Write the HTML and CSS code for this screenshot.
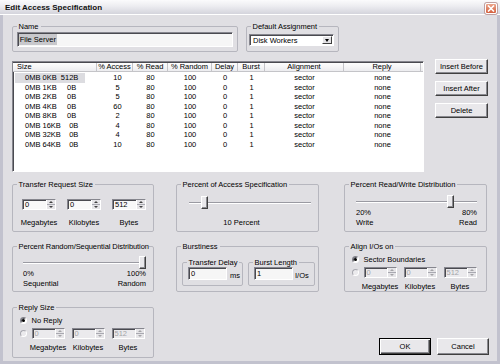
FILE: index.html
```html
<!DOCTYPE html>
<html lang="en">

<head>
    <meta charset="UTF-8">
    <meta name="viewport" content="width=device-width, initial-scale=1.0">
    <title>Edit Access Specification</title>
    <link rel="stylesheet" href="styles.css">
</head>

<body>
    <div class="dialog">
        <!-- Title bar -->
        <div class="titlebar">
            <span class="title">Edit Access Specification</span>
            <span class="close-btn">
                <svg width="8" height="7" viewBox="0 0 8 7">
                    <path d="M1 0.5 L7 6.5 M7 0.5 L1 6.5" stroke="#fff" stroke-width="1.6" />
                </svg>
            </span>
        </div>

        <div class="client">
            <!-- Name + default assignment -->
            <div class="top-row">
                <fieldset class="group name-group">
                    <legend>Name</legend>
                    <div class="edit name-edit"><span class="selected-text">File Server</span></div>
                </fieldset>
                <fieldset class="group assign-group">
                    <legend>Default Assignment</legend>
                    <div class="combo">
                        <span class="combo-text">Disk Workers</span>
                        <span class="combo-btn"></span>
                    </div>
                </fieldset>
            </div>

            <!-- Access list + side buttons -->
            <div class="list-row">
                <div class="listview">
                    <div class="lv-header">
                        <div class="lv-col col-size">Size</div>
                        <div class="lv-col">% Access</div>
                        <div class="lv-col">% Read</div>
                        <div class="lv-col">% Random</div>
                        <div class="lv-col">Delay</div>
                        <div class="lv-col">Burst</div>
                        <div class="lv-col">Alignment</div>
                        <div class="lv-col">Reply</div>
                    </div>
                    <div class="lv-body">
                        <div class="lv-item selected">
                            <div class="cell col-size"><span class="size-text">0MB 0KB  512B</span></div>
                            <div class="cell col-access">10</div><div class="cell">80</div><div class="cell">100</div>
                            <div class="cell">0</div><div class="cell">1</div><div class="cell">sector</div><div class="cell">none</div>
                        </div>
                        <div class="lv-item">
                            <div class="cell col-size"><span class="size-text">0MB 1KB     0B</span></div>
                            <div class="cell col-access">5</div><div class="cell">80</div><div class="cell">100</div>
                            <div class="cell">0</div><div class="cell">1</div><div class="cell">sector</div><div class="cell">none</div>
                        </div>
                        <div class="lv-item">
                            <div class="cell col-size"><span class="size-text">0MB 2KB     0B</span></div>
                            <div class="cell col-access">5</div><div class="cell">80</div><div class="cell">100</div>
                            <div class="cell">0</div><div class="cell">1</div><div class="cell">sector</div><div class="cell">none</div>
                        </div>
                        <div class="lv-item">
                            <div class="cell col-size"><span class="size-text">0MB 4KB     0B</span></div>
                            <div class="cell col-access">60</div><div class="cell">80</div><div class="cell">100</div>
                            <div class="cell">0</div><div class="cell">1</div><div class="cell">sector</div><div class="cell">none</div>
                        </div>
                        <div class="lv-item">
                            <div class="cell col-size"><span class="size-text">0MB 8KB     0B</span></div>
                            <div class="cell col-access">2</div><div class="cell">80</div><div class="cell">100</div>
                            <div class="cell">0</div><div class="cell">1</div><div class="cell">sector</div><div class="cell">none</div>
                        </div>
                        <div class="lv-item">
                            <div class="cell col-size"><span class="size-text">0MB 16KB    0B</span></div>
                            <div class="cell col-access">4</div><div class="cell">80</div><div class="cell">100</div>
                            <div class="cell">0</div><div class="cell">1</div><div class="cell">sector</div><div class="cell">none</div>
                        </div>
                        <div class="lv-item">
                            <div class="cell col-size"><span class="size-text">0MB 32KB    0B</span></div>
                            <div class="cell col-access">4</div><div class="cell">80</div><div class="cell">100</div>
                            <div class="cell">0</div><div class="cell">1</div><div class="cell">sector</div><div class="cell">none</div>
                        </div>
                        <div class="lv-item">
                            <div class="cell col-size"><span class="size-text">0MB 64KB    0B</span></div>
                            <div class="cell col-access">10</div><div class="cell">80</div><div class="cell">100</div>
                            <div class="cell">0</div><div class="cell">1</div><div class="cell">sector</div><div class="cell">none</div>
                        </div>
                    </div>
                </div>

                <div class="side-buttons">
                    <button class="btn side-btn">Insert Before</button>
                    <button class="btn side-btn">Insert After</button>
                    <button class="btn side-btn">Delete</button>
                </div>
            </div>

            <!-- Settings groups -->
            <div class="settings">
                <fieldset class="group col-a">
                    <legend>Transfer Request Size</legend>
                    <div class="spin-row transfer-body">
                        <div class="spin-col">
                            <div class="spin"><span class="spin-val">0</span><span class="spin-btns"><i class="up"></i><i class="down"></i></span></div>
                            <span class="spin-label">Megabytes</span>
                        </div>
                        <div class="spin-col">
                            <div class="spin"><span class="spin-val">0</span><span class="spin-btns"><i class="up"></i><i class="down"></i></span></div>
                            <span class="spin-label">Kilobytes</span>
                        </div>
                        <div class="spin-col">
                            <div class="spin"><span class="spin-val">512</span><span class="spin-btns"><i class="up"></i><i class="down"></i></span></div>
                            <span class="spin-label">Bytes</span>
                        </div>
                    </div>
                </fieldset>

                <fieldset class="group col-b">
                    <legend>Percent of Access Specification</legend>
                    <div class="access-body">
                        <div class="slider">
                            <div class="track"></div>
                            <div class="thumb" style="--pos: 0.1"></div>
                        </div>
                        <div class="slider-caption">10 Percent</div>
                    </div>
                </fieldset>

                <fieldset class="group col-c">
                    <legend>Percent Read/Write Distribution</legend>
                    <div class="rw-body">
                        <div class="slider">
                            <div class="track"></div>
                            <div class="thumb" style="--pos: 0.8"></div>
                        </div>
                        <div class="slider-ends">
                            <span>20%<br>Write</span>
                            <span class="end-right">80%<br>Read</span>
                        </div>
                    </div>
                </fieldset>

                <fieldset class="group col-a">
                    <legend class="long-legend">Percent Random/Sequential Distribution</legend>
                    <div class="random-body">
                        <div class="slider">
                            <div class="track"></div>
                            <div class="thumb" style="--pos: 1"></div>
                        </div>
                        <div class="slider-ends">
                            <span>0%<br>Sequential</span>
                            <span class="end-right">100%<br>Random</span>
                        </div>
                    </div>
                </fieldset>

                <fieldset class="group col-b">
                    <legend>Burstiness</legend>
                    <div class="burst-body">
                        <fieldset class="group inner-group delay-group">
                            <legend>Transfer Delay</legend>
                            <div class="inner-body">
                                <div class="edit small-edit">0</div>
                                <span class="unit">ms</span>
                            </div>
                        </fieldset>
                        <fieldset class="group inner-group length-group">
                            <legend>Burst Length</legend>
                            <div class="inner-body">
                                <div class="edit small-edit">1</div>
                                <span class="unit unit-ios">I/Os</span>
                            </div>
                        </fieldset>
                    </div>
                </fieldset>

                <fieldset class="group col-c">
                    <legend>Align I/Os on</legend>
                    <div class="option-body">
                        <div class="radio-row">
                            <span class="radio checked"></span>
                            <span>Sector Boundaries</span>
                        </div>
                        <div class="radio-row option-spins">
                            <span class="radio disabled"></span>
                            <div class="spin-col narrow">
                                <div class="spin disabled"><span class="spin-val">0</span><span class="spin-btns"><i class="up"></i><i class="down"></i></span></div>
                                <span class="spin-label option-label">Megabytes</span>
                            </div>
                            <div class="spin-col narrow">
                                <div class="spin disabled"><span class="spin-val">0</span><span class="spin-btns"><i class="up"></i><i class="down"></i></span></div>
                                <span class="spin-label option-label">Kilobytes</span>
                            </div>
                            <div class="spin-col narrow">
                                <div class="spin disabled"><span class="spin-val">512</span><span class="spin-btns"><i class="up"></i><i class="down"></i></span></div>
                                <span class="spin-label option-label">Bytes</span>
                            </div>
                        </div>
                    </div>
                </fieldset>
            </div>

            <!-- Reply size + dialog buttons -->
            <div class="bottom-row">
                <fieldset class="group col-a reply-group">
                    <legend>Reply Size</legend>
                    <div class="option-body reply-body">
                        <div class="radio-row">
                            <span class="radio checked"></span>
                            <span>No Reply</span>
                        </div>
                        <div class="radio-row option-spins">
                            <span class="radio disabled"></span>
                            <div class="spin-col narrow">
                                <div class="spin disabled"><span class="spin-val">0</span><span class="spin-btns"><i class="up"></i><i class="down"></i></span></div>
                                <span class="spin-label option-label">Megabytes</span>
                            </div>
                            <div class="spin-col narrow">
                                <div class="spin disabled"><span class="spin-val">0</span><span class="spin-btns"><i class="up"></i><i class="down"></i></span></div>
                                <span class="spin-label option-label">Kilobytes</span>
                            </div>
                            <div class="spin-col narrow">
                                <div class="spin disabled"><span class="spin-val">512</span><span class="spin-btns"><i class="up"></i><i class="down"></i></span></div>
                                <span class="spin-label option-label">Bytes</span>
                            </div>
                        </div>
                    </div>
                </fieldset>

                <div class="dialog-buttons">
                    <button class="btn dlg-btn btn-default">OK</button>
                    <button class="btn dlg-btn">Cancel</button>
                </div>
            </div>
        </div>
    </div>
</body>

</html>
```

FILE: styles.css
```css
/* Reset styling */
* {
    margin: 0;
    padding: 0;
    box-sizing: border-box;
}

body {
    width: 500px;
    height: 364px;
    overflow: hidden;
    background-color: #e0dfe3;
    font-family: "Liberation Sans", Arial, sans-serif;
    font-size: 7.5px;
    line-height: 9px;
    color: #000;
}

/* Window frame */
.dialog {
    width: 500px;
    height: 364px;
    display: flex;
    flex-direction: column;
}

.titlebar {
    height: 15px;
    display: flex;
    align-items: center;
    justify-content: space-between;
    padding: 0 3px 0 5px;
    background: linear-gradient(#fbfbfc, #ececf0 45%, #d4d4dc);
    border-bottom: 1px solid #fff;
}

.title {
    font-weight: bold;
    font-size: 8px;
    color: #111;
    padding-top: 1px;
}

.close-btn {
    width: 12px;
    height: 11px;
    margin-top: 2px;
    display: flex;
    align-items: center;
    justify-content: center;
    background: linear-gradient(#eba58c, #d4603e);
    border: 1px solid #fff;
    border-radius: 2px;
    box-shadow: 0 0 0 1px #c0a0a0;
}

.client {
    flex: 1;
    display: flex;
    flex-direction: column;
    padding: 7px 8px 0 9px;
    background-color: #e0dfe3;
    border: 3px solid #c2c2ce;
    border-top: none;
}

/* Group boxes */
.group {
    border: 1px solid #b6b6be;
    border-radius: 2px;
    min-width: 0;
}

.group legend {
    margin-left: 4px;
    padding: 0 2px 0 1.5px;
    line-height: 9px;
    white-space: nowrap;
}

.group legend.long-legend {
    padding-right: 0;
    letter-spacing: -0.08px;
}

/* Sunken controls */
.edit,
.spin,
.combo,
.listview {
    border: 1px solid;
    border-color: #86868e #fff #fff #86868e;
    box-shadow: inset 1px 1px 0 #4a4a50;
}

.edit {
    background-color: #f6f6f6;
    padding-left: 2px;
}

/* Top row */
.top-row {
    display: flex;
    gap: 8px;
    height: 30px;
}

.name-group {
    width: 226px;
    height: 30px;
}

.name-edit {
    width: 216px;
    height: 15px;
    margin: 1px 0 0 3.7px;
    line-height: 13px;
    padding-left: 1px;
}

.selected-text {
    background-color: #c8c8cc;
    padding: 1px 1px;
}

.assign-group {
    width: 93px;
    height: 30px;
}

.combo {
    width: 85px;
    height: 12px;
    margin: 3px 0 0 2px;
    display: flex;
    align-items: center;
    justify-content: space-between;
    background-color: #fff;
    padding-left: 3px;
}

.combo-btn {
    width: 10px;
    height: 8px;
    margin-right: 1px;
    display: flex;
    align-items: center;
    justify-content: center;
    background-color: #e4e3e6;
    border: 1px solid;
    border-color: #fff #404040 #404040 #fff;
}

.combo-btn::after {
    content: "";
    border-left: 2.5px solid transparent;
    border-right: 2.5px solid transparent;
    border-top: 3px solid #000;
}

/* List view */
.list-row {
    display: flex;
    gap: 11px;
    height: 113px;
    margin-top: 7px;
}

.listview {
    width: 412px;
    height: 111px;
    margin-top: 2px;
    background-color: #fff;
    overflow: hidden;
}

.lv-header,
.lv-item {
    display: grid;
    grid-template-columns: 84px 36px 35px 44px 26px 27px 79px 77px;
}

.lv-header {
    height: 9px;
    margin-top: 1px;
    background: linear-gradient(#fefefe, #ececef);
    border-bottom: 1px solid #c4c4c8;
}

.lv-col {
    text-align: center;
    line-height: 8px;
    border-right: 1px solid #c4c4c8;
    white-space: nowrap;
    overflow: hidden;
}

.lv-col.col-size {
    text-align: left;
    padding-left: 4px;
}

.lv-body {
    padding-top: 1px;
}

.lv-item {
    height: 9.5px;
    line-height: 9.5px;
}

.cell {
    text-align: center;
    white-space: nowrap;
}

.cell.col-access {
    padding-left: 5px;
}

.cell.col-size {
    text-align: left;
    padding-left: 2px;
}

.size-text {
    display: block;
    width: 70px;
    padding-left: 10px;
    white-space: pre;
}

.lv-item.selected .size-text {
    background-color: #dcdce0;
}

/* Buttons */
.btn {
    font: inherit;
    color: #000;
    background-color: #e9e8eb;
    border: 1px solid;
    border-color: #fff #404040 #404040 #fff;
    box-shadow: inset -1px -1px 0 #8a8a90;
}

.side-buttons {
    display: flex;
    flex-direction: column;
    gap: 7px;
}

.side-btn {
    width: 53px;
    height: 15px;
}

.dialog-buttons {
    display: flex;
    gap: 6px;
    align-self: flex-end;
    margin-bottom: 3px;
}

.dlg-btn {
    width: 52px;
    height: 17px;
}

.btn-default {
    border: 1px solid #000;
    box-shadow: inset 1px 1px 0 #fff, inset -1px -1px 0 #404040, inset -2px -2px 0 #8a8a90;
}

/* Settings grid */
.settings {
    display: grid;
    grid-template-columns: 164px 168px 143px;
    grid-template-rows: 52px 50px;
    row-gap: 10px;
    margin-top: 8px;
}

.col-a {
    width: 142px;
}

.col-b,
.col-c {
    width: 143px;
}

/* Spin boxes */
.spin-row {
    display: flex;
}

.transfer-body {
    gap: 11px;
    padding: 10px 0 0 9px;
}

.spin-col {
    width: 34px;
    display: flex;
    flex-direction: column;
    align-items: center;
}

.spin-col.narrow {
    width: 33px;
}

.spin {
    width: 100%;
    height: 11px;
    display: flex;
    background-color: #f8f8f8;
}

.spin-val {
    flex: 1;
    padding-left: 2px;
    line-height: 9px;
}

.spin-btns {
    width: 9px;
    display: flex;
    flex-direction: column;
    background-color: #e6e5e8;
    border-left: 1px solid #fff;
}

.spin-btns i {
    flex: 1;
    display: flex;
    align-items: center;
    justify-content: center;
}

.spin-btns i.up {
    border-bottom: 1px solid #a8a8b0;
}

.spin-btns i.up::after {
    content: "";
    border-left: 2px solid transparent;
    border-right: 2px solid transparent;
    border-bottom: 2px solid #404040;
}

.spin-btns i.down::after {
    content: "";
    border-left: 2px solid transparent;
    border-right: 2px solid transparent;
    border-top: 2px solid #404040;
}

.spin.disabled {
    background-color: #ebeaed;
    color: #a4a4a8;
}

.spin.disabled .spin-btns i.up::after {
    border-bottom-color: #a4a4a8;
}

.spin.disabled .spin-btns i.down::after {
    border-top-color: #a4a4a8;
}

.spin-label {
    margin-top: 7.5px;
    white-space: nowrap;
}

.option-label {
    margin-top: 3.5px;
}

/* Sliders */
.slider {
    position: relative;
    height: 13px;
    padding-top: 6px;
}

.track {
    height: 2px;
    border-top: 1px solid #9a9aa2;
    border-bottom: 1px solid #fff;
}

.thumb {
    position: absolute;
    top: 0;
    left: calc((100% - 7px) * var(--pos));
    width: 7px;
    height: 13px;
    background-color: #e9e8eb;
    border: 1px solid;
    border-color: #fff #404040 #404040 #fff;
    box-shadow: inset -1px -1px 0 #8a8a90;
}

.access-body {
    padding: 7px 7px 0 12px;
}

.slider-caption {
    margin: 8.5px 0 0 -12px;
    text-align: center;
    padding-right: 5px;
}

.rw-body {
    padding: 6px 9px 0 11px;
}

.random-body {
    padding: 5px 7px 0 10px;
}

.slider-ends {
    display: flex;
    justify-content: space-between;
    line-height: 10px;
}

.end-right {
    text-align: right;
}

/* Burstiness */
.burst-body {
    display: flex;
    gap: 5px;
    padding: 7px 0 0 5px;
}

.inner-group {
    height: 28px;
}

.delay-group {
    width: 61px;
}

.length-group {
    width: 67px;
}

.inner-body {
    display: flex;
    align-items: flex-end;
    padding-left: 5px;
}

.small-edit {
    width: 39px;
    height: 13px;
    line-height: 11px;
}

.unit {
    margin-left: 3px;
    line-height: 9px;
}

.unit-ios {
    margin-left: 2px;
}

/* Radio options */
.option-body {
    padding: 4px 0 0 6.5px;
}

.reply-body {
    padding-top: 3.5px;
}

.radio-row {
    display: flex;
    align-items: center;
    gap: 5px;
}

.option-spins {
    align-items: flex-start;
    gap: 7px;
    margin-top: 3px;
}

.reply-body .option-spins {
    margin-top: 3.5px;
}

.option-spins .radio {
    margin: 2px -2px 0 0;
}

.radio {
    width: 7px;
    height: 7px;
    flex-shrink: 0;
    display: flex;
    align-items: center;
    justify-content: center;
    border-radius: 50%;
    background-color: #fff;
    border: 1px solid;
    border-color: #808088 #fff #fff #808088;
    box-shadow: inset 1px 1px 0 #505058;
}

.radio.checked::after {
    content: "";
    width: 3px;
    height: 3px;
    border-radius: 50%;
    background-color: #000;
}

.radio.disabled {
    background-color: #ebeaed;
    border-color: #a8a8b0 #fff #fff #a8a8b0;
    box-shadow: none;
}

/* Bottom row */
.bottom-row {
    display: flex;
    justify-content: space-between;
    height: 55px;
    margin-top: 11px;
}

.reply-group {
    height: 55px;
}
```
